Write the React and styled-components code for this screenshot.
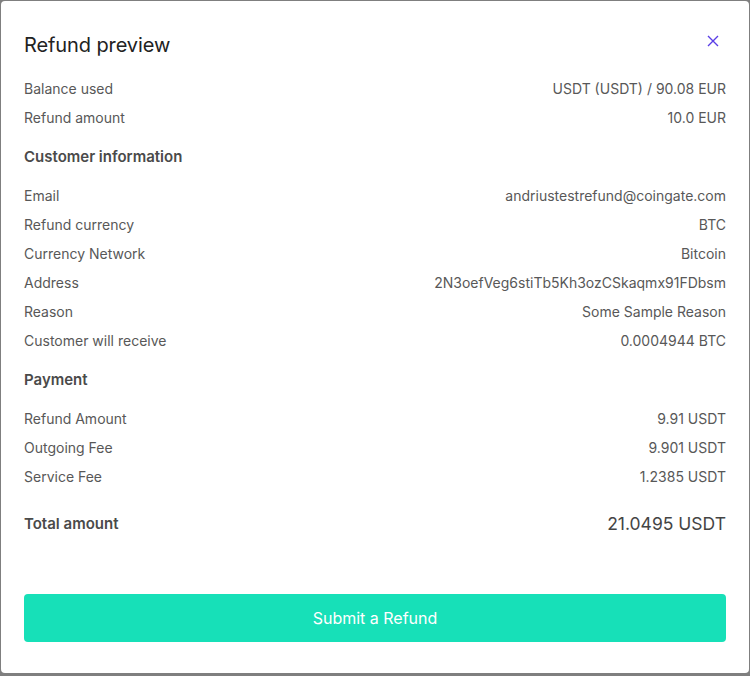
import React from "react";
import styled, { createGlobalStyle } from "styled-components";

const GlobalStyle = createGlobalStyle`
  html, body {
    margin: 0;
    padding: 0;
    background: #7f7f7f;
    font-family: Inter, "Noto Sans", sans-serif;
  }
  body {
    padding: 1px 1px 0;
    height: 676px;
    box-sizing: border-box;
    overflow: hidden;
  }
`;

const summary = [
  ["Balance used", "USDT (USDT) / 90.08 EUR"],
  ["Refund amount", "10.0 EUR"],
];

const customer = [
  ["Email", "andriustestrefund@coingate.com"],
  ["Refund currency", "BTC"],
  ["Currency Network", "Bitcoin"],
  ["Address", "2N3oefVeg6stiTb5Kh3ozCSkaqmx91FDbsm"],
  ["Reason", "Some Sample Reason"],
  ["Customer will receive", "0.0004944 BTC"],
];

const payment = [
  ["Refund Amount", "9.91 USDT"],
  ["Outgoing Fee", "9.901 USDT"],
  ["Service Fee", "1.2385 USDT"],
];

function Rows({ items }) {
  return items.map(([label, value]) => (
    <Row key={label}>
      <Label>{label}</Label>
      <Value>{value}</Value>
    </Row>
  ));
}

export default function App() {
  return (
    <>
      <GlobalStyle />
      <Modal>
        <Header>
          <Title>Refund preview</Title>
          <Close aria-label="Close">
            <svg width="12" height="12" viewBox="0 0 12 12">
              <path d="M1 1L11 11M11 1L1 11" stroke="#5a3ee6" strokeWidth="1.4" />
            </svg>
          </Close>
        </Header>
        <Rows items={summary} />
        <SectionTitle>Customer information</SectionTitle>
        <Rows items={customer} />
        <SectionTitle>Payment</SectionTitle>
        <Rows items={payment} />
        <TotalRow>
          <TotalLabel>Total amount</TotalLabel>
          <TotalValue>21.0495 USDT</TotalValue>
        </TotalRow>
        <SubmitButton>Submit a Refund</SubmitButton>
      </Modal>
    </>
  );
}

const Modal = styled.div`
  background: #fff;
  border-radius: 4px;
  height: 672px;
  box-sizing: border-box;
  padding: 30px 23px 0;
  display: flex;
  flex-direction: column;
`;

const Header = styled.div`
  display: flex;
  align-items: center;
  justify-content: space-between;
  height: 28px;
  margin-bottom: 15px;
`;

const Title = styled.h2`
  margin: 0;
  font-size: 20px;
  font-weight: 400;
  color: #222;
  letter-spacing: -0.1px;
`;

const Close = styled.button`
  border: 0;
  background: none;
  padding: 0;
  margin-right: 7px;
  margin-top: -8px;
  display: flex;
  cursor: pointer;
`;

const Row = styled.div`
  display: flex;
  justify-content: space-between;
  align-items: center;
  height: 29px;
  font-size: 14px;
  color: #585858;
`;

const Label = styled.span``;

const Value = styled.span`
  text-align: right;
`;

const SectionTitle = styled.h3`
  margin: 13px 0 12px;
  height: 24px;
  line-height: 24px;
  font-size: 15px;
  font-weight: 600;
  color: #4a4a4a;
`;

const TotalRow = styled(Row)`
  margin-top: 18px;
`;

const TotalLabel = styled.span`
  font-size: 15px;
  font-weight: 600;
  color: #4a4a4a;
`;

const TotalValue = styled.span`
  font-size: 17.5px;
  color: #444;
`;

const SubmitButton = styled.button`
  margin-top: 56px;
  height: 48px;
  width: 100%;
  border: 0;
  border-radius: 4px;
  background: #17e0b8;
  color: #fff;
  font-family: Inter, "Noto Sans", sans-serif;
  font-size: 16px;
  cursor: pointer;
`;
